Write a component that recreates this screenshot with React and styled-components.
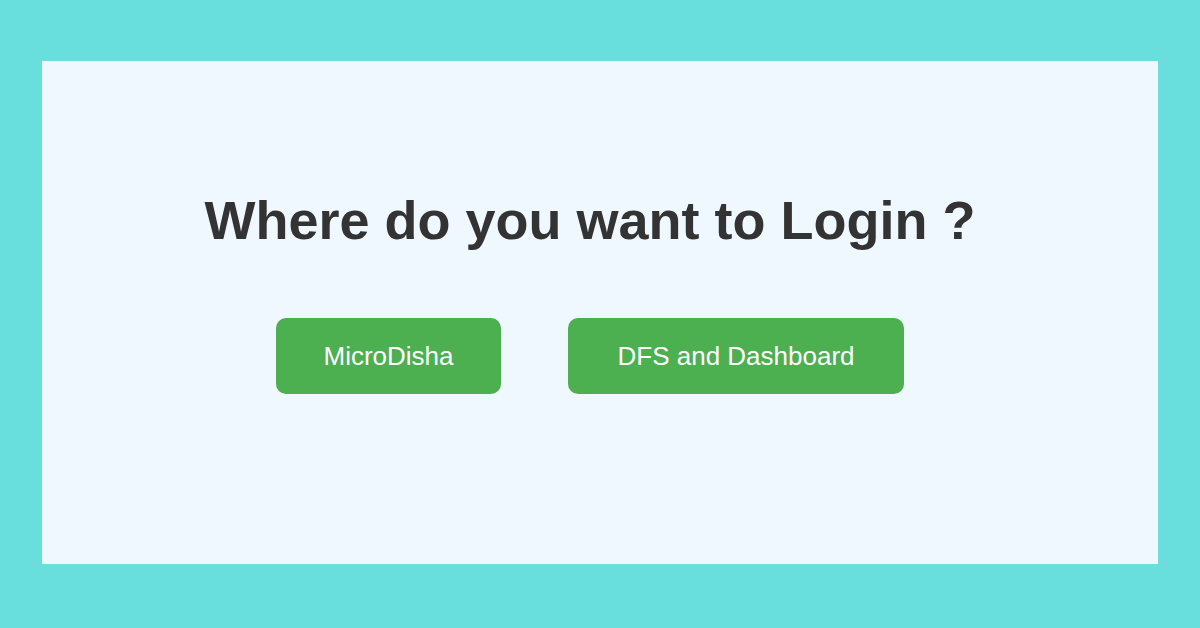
import React from 'react';
import styled, { createGlobalStyle } from 'styled-components';

// ------ PAGE STYLE --------
const GlobalStyle = createGlobalStyle`
  html, body {
    margin: 0;
    padding: 0;
    background: #68dfdc;
    font-family: 'Liberation Sans', Arial, Helvetica, sans-serif;
  }
`;

const Page = styled.div`
  box-sizing: border-box;
  display: flex;
  width: 100%;
  height: 628px;
  padding: 61px 42px 64px 42px;
`;
Page.displayName = 'Page';

// ------ PANEL STYLING ---------
const Panel = styled.main`
  box-sizing: border-box;
  flex: 1;
  display: flex;
  flex-direction: column;
  align-items: center;
  justify-content: center;
  gap: 67px;
  padding: 0 20px 41px 0;
  background: #f0f8ff;
`;
Panel.displayName = 'Panel';

const Title = styled.h1`
  margin: 0;
  font-size: 54px;
  font-weight: 700;
  color: #333333;
  line-height: 61px;
`;
Title.displayName = 'Title';

const ButtonRow = styled.div`
  display: flex;
  gap: 67px;
`;
ButtonRow.displayName = 'ButtonRow';

const LoginButton = styled.button`
  width: ${(props) => props.$width}px;
  height: 76px;
  padding: 0;
  border: none;
  border-radius: 10px;
  background: #4caf50;
  color: #ffffff;
  font-family: inherit;
  font-size: 26px;
  cursor: pointer;
`;
LoginButton.displayName = 'LoginButton';

const App = () => (
  <>
    <GlobalStyle />
    <Page>
      <Panel>
        <Title>Where do you want to Login ?</Title>
        <ButtonRow>
          <LoginButton type="button" $width={225}>MicroDisha</LoginButton>
          <LoginButton type="button" $width={336}>DFS and Dashboard</LoginButton>
        </ButtonRow>
      </Panel>
    </Page>
  </>
);

export default App;
